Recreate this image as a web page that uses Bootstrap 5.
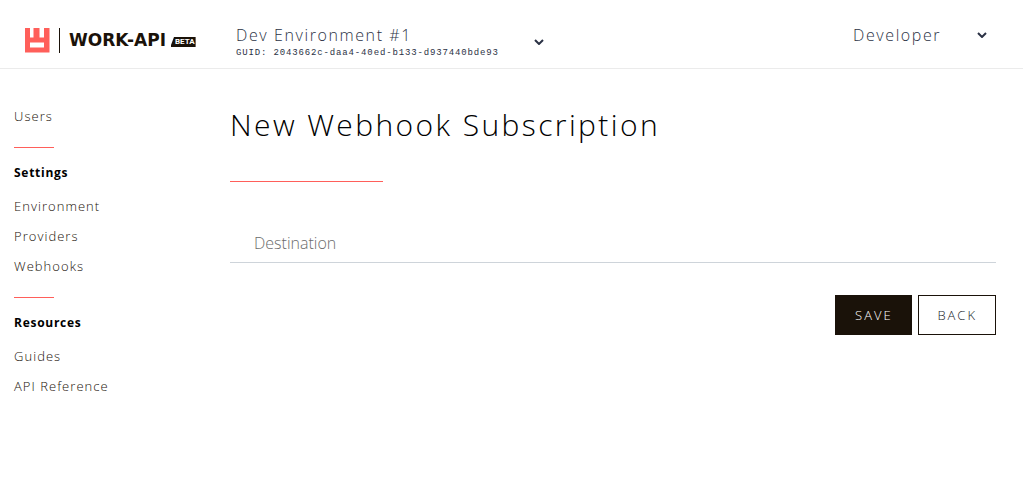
<!DOCTYPE html>
<html lang="en">
<head>
<meta charset="utf-8">
<meta name="viewport" content="width=device-width, initial-scale=1">
<title>New Webhook Subscription</title>
<link href="https://cdn.jsdelivr.net/npm/bootstrap@5.3.0/dist/css/bootstrap.min.css" rel="stylesheet">
<style>
body { font-family: "Open Sans", sans-serif; font-weight: 300; color: #1a1209; background: #fff; }
.topbar { border-bottom: 1px solid #ebebeb; min-height: 69px; padding: 24px 36px 0 24px; }
.brand { width: 212px; color: #1a1209; height: 32px; }
.brand-rule { width: 1px; height: 25px; background: #1a1209; margin: 0 9px; }
.brand-name { font: bold 17px/24px "DejaVu Sans", sans-serif; }
.beta-tag { font: bold 8px/10px "Roboto", sans-serif; color: #fff; background: #1a1209; padding: 0 1px 0 4px; margin: 4px 0 0 5px; clip-path: polygon(3px 0, 100% 0, 100% 100%, 0 100%, 0 8px); }
.picker { border: 0; background: none; padding: 0; color: #2b3245; font-weight: 300; font-size: 16px; line-height: 22px; letter-spacing: .1em; text-align: left; }
.env-picker { width: 308px; }
.user-picker { width: 134px; height: 22px; }
.guid { font: 9px/14px "Liberation Mono", monospace; letter-spacing: .095em; }
.side { width: 230px; padding: 32px 14px 0; font-size: 13px; letter-spacing: .08em; }
.side a { display: block; color: #1a1209; text-decoration: none; line-height: 30px; }
.side h2 { font-size: 12px; font-weight: 700; line-height: 18px; letter-spacing: .06em; color: #000; margin: 16px 0 9px; }
.accent { border: 0; border-top: 1px solid #ff5f5a; opacity: 1; margin: 0; width: 40px; }
.side .accent { margin-top: 16px; }
.content { padding: 36px 27px 0 0; }
.content h1 { font-size: 30px; font-weight: 300; line-height: 40px; letter-spacing: .08em; color: #000; margin: 0 0 36px; }
.content .accent { width: 20%; }
.line-field { margin-top: 42px; }
.line-field > .form-control { border: 0; border-bottom: 1px solid #ced4da; border-radius: 0; padding: 0 24px; height: 39px; min-height: 0; font-size: 16px; font-weight: 300; }
.line-field > label { padding: 0 24px; line-height: 38px; color: #6c6c6c; border: 0; }
.line-field > .form-control:focus ~ label, .line-field > .form-control:not(:placeholder-shown) ~ label { transform: scale(.75) translateY(-20px); }
.act { border: 1px solid #1a1209; border-radius: 0; height: 40px; min-width: 77px; padding: 1px 18px 0; font-size: 13px; font-weight: 300; letter-spacing: 2px; }
.act-dark, .act-dark:hover { background: #1a1209; color: #fff; }
.act-row { gap: 6px; margin-top: 32px; }
</style>
</head>
<body>
<header class="topbar d-flex align-items-start">
  <a href="#" class="brand d-flex align-items-center text-decoration-none flex-shrink-0" aria-label="Work-API beta">
    <svg width="26" height="26" viewBox="0 0 26 26" aria-hidden="true"><path fill="#ff5f5a" fill-rule="evenodd" d="M1 1h5v9.500h3.500V1h6v9.500H20V1h5.500v24.500H1zM6 15.500v5h14v-5z"/></svg>
    <span class="brand-rule"></span>
    <span class="brand-name">WORK-API</span>
    <span class="beta-tag">BETA</span>
  </a>
  <button type="button" class="picker env-picker d-flex align-items-center justify-content-between">
    <span><span class="d-block">Dev Environment #1</span><span class="guid d-block text-nowrap">GUID: 2043662c-daa4-40ed-b133-d937440bde93</span></span>
    <svg width="10" height="6" viewBox="0 0 10 6" fill="none" stroke="#2b3245" stroke-width="2" aria-hidden="true"><path d="M1 1l4 4 4-4"/></svg>
  </button>
  <button type="button" class="picker user-picker d-flex align-items-center justify-content-between ms-auto">
    <span>Developer</span>
    <svg width="10" height="6" viewBox="0 0 10 6" fill="none" stroke="#2b3245" stroke-width="2" aria-hidden="true"><path d="M1 1l4 4 4-4"/></svg>
  </button>
</header>
<div class="d-flex">
  <nav class="side flex-shrink-0">
    <a href="#">Users</a>
    <hr class="accent">
    <h2>Settings</h2>
    <a href="#">Environment</a>
    <a href="#">Providers</a>
    <a href="#">Webhooks</a>
    <hr class="accent">
    <h2>Resources</h2>
    <a href="#">Guides</a>
    <a href="#">API Reference</a>
  </nav>
  <main class="content flex-grow-1">
    <h1>New Webhook Subscription</h1>
    <hr class="accent">
    <form>
      <div class="form-floating line-field">
        <input id="destination" type="text" class="form-control" placeholder=" ">
        <label for="destination">Destination</label>
      </div>
      <div class="act-row d-flex justify-content-end">
        <button type="submit" class="btn act act-dark">SAVE</button>
        <button type="button" class="btn act">BACK</button>
      </div>
    </form>
  </main>
</div>
<script src="https://cdn.jsdelivr.net/npm/bootstrap@5.3.0/dist/js/bootstrap.bundle.min.js"></script>
</body>
</html>
